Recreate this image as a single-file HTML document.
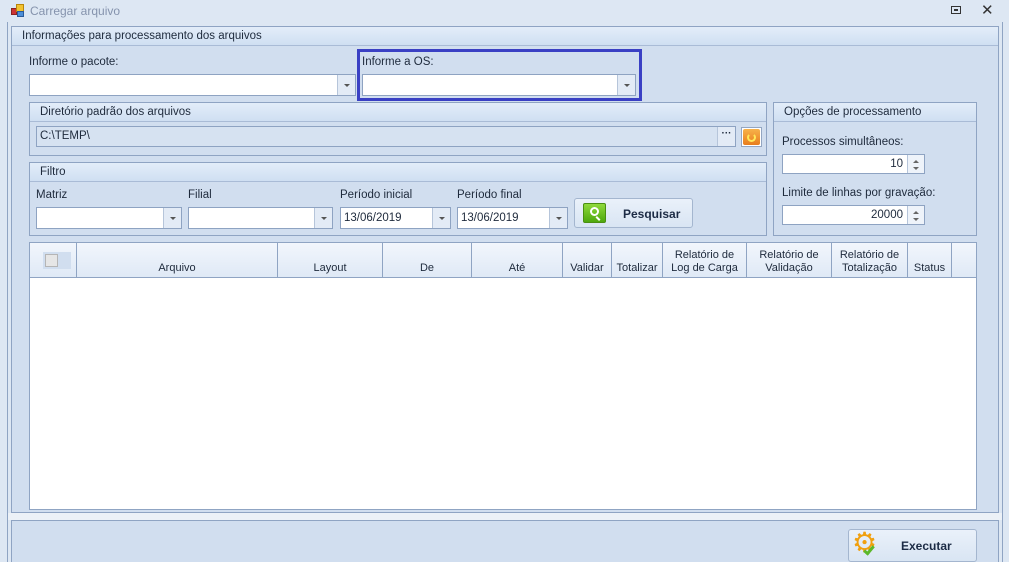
<!DOCTYPE html>
<html><head><meta charset="utf-8"><style>
*{box-sizing:border-box;margin:0;padding:0}
html,body{width:1009px;height:562px;overflow:hidden}
body{background:#dde7f3;font-family:"Liberation Sans",sans-serif;font-size:11.5px;color:#1e2a3c;position:relative}
.a{position:absolute}
.lbl{position:absolute;font-size:11.5px;color:#1e2a3c;white-space:nowrap}
.panel{position:absolute;background:#d1deef;border:1px solid #8fa4c3}
.hdr{position:absolute;left:0;right:0;top:0;height:19px;background:linear-gradient(#e3edf9,#cfdff2);border-bottom:1px solid #a9bbd6;padding:3px 0 0 10px;white-space:nowrap}
.box{position:absolute;background:#fff;border:1px solid #8ea3c2;height:22px;font-size:11.5px;padding:4px 3px;white-space:nowrap}
.dd{position:absolute;right:0;top:0;bottom:0;width:18px;border-left:1px solid #b6c5da;background:#e3ebf6}
.dd:after{content:"";position:absolute;left:6px;top:9px;border-left:3px solid transparent;border-right:3px solid transparent;border-top:3px solid #555}
.spin{position:absolute;right:0;top:0;bottom:0;width:17px;border-left:1px solid #b6c5da;background:#eef3fa}
.spin:before{content:"";position:absolute;left:5px;top:5px;border-left:3px solid transparent;border-right:3px solid transparent;border-bottom:3px solid #666}
.spin:after{content:"";position:absolute;left:5px;top:12px;border-left:3px solid transparent;border-right:3px solid transparent;border-top:3px solid #666}
.col{position:absolute;top:0;height:34px;border-right:1px solid #8fa4c3;text-align:center;font-size:11px;line-height:13px;display:flex;align-items:flex-end;justify-content:center;padding-bottom:2px}
.btn{position:absolute;border:1px solid #a4b6cf;border-radius:3px;background:linear-gradient(#eaf1fa,#d9e5f3);font-weight:bold;color:#1c2b45}
</style></head><body>
<div class="a" style="left:11px;top:4px;width:14px;height:14px">
<div class="a" style="left:0;top:4px;width:6px;height:7px;background:#c33;border:1px solid #822"></div>
<div class="a" style="left:5px;top:0;width:8px;height:8px;background:#f2c230;border:1px solid #b8860b"></div>
<div class="a" style="left:6px;top:7px;width:7px;height:6px;background:#4d8fd8;border:1px solid #2a5a9a"></div>
</div>
<div class="lbl" style="left:30px;top:4px;font-size:12px;color:#8593ad">Carregar arquivo</div>
<div class="a" style="left:951px;top:6px;width:10px;height:8px;border:1px solid #333"><div class="a" style="left:2px;top:2px;width:4px;height:2px;border:1px solid #333"></div></div>
<div class="lbl" style="left:981px;top:1px;font-size:15px;color:#333">✕</div>
<div class="a" style="left:7px;top:22px;width:1px;height:540px;background:#8fa4c3"></div>
<div class="a" style="left:1002px;top:22px;width:1px;height:540px;background:#8fa4c3"></div>

<div class="panel" style="left:11px;top:26px;width:988px;height:487px">
<div class="hdr">Informações para processamento dos arquivos</div>
</div>
<div class="a" style="left:8px;top:513px;width:994px;height:7px;background:#ecf1f7"></div>
<div class="panel" style="left:11px;top:520px;width:988px;height:42px;border-bottom:none"></div>

<div class="lbl" style="left:29px;top:56px">Informe o pacote:</div>
<div class="box" style="left:29px;top:74px;width:327px"><div class="dd"></div></div>
<div class="a" style="left:357px;top:49px;width:285px;height:52px;border:3px solid #3a40c4"></div>
<div class="lbl" style="left:362px;top:56px">Informe a OS:</div>
<div class="box" style="left:362px;top:74px;width:274px"><div class="dd"></div></div>

<div class="panel" style="left:29px;top:102px;width:738px;height:54px"><div class="hdr">Diretório padrão dos arquivos</div></div>
<div class="box" style="left:36px;top:126px;width:700px;height:21px;background:#d6e2f1;padding-top:3px">C:\TEMP\<div class="a" style="right:0;top:0;bottom:0;width:18px;border-left:1px solid #b6c5da;background:#e3ebf6;text-align:center;font-weight:bold;font-size:10px;line-height:14px">···</div></div>
<div class="a" style="left:741px;top:127px;width:21px;height:20px;border:1px solid #93a6c2;background:#fff;padding:1px"><div style="width:17px;height:16px;background:linear-gradient(#f7b24a,#e87d1d);border-radius:2px;position:relative"><div class="a" style="left:4px;top:4px;width:9px;height:9px;border:2px solid #ffe85a;border-top-color:transparent;border-radius:50%"></div></div></div>

<div class="panel" style="left:773px;top:102px;width:204px;height:134px"><div class="hdr">Opções de processamento</div></div>
<div class="lbl" style="left:782px;top:136px">Processos simultâneos:</div>
<div class="box" style="left:782px;top:154px;width:143px;height:20px;text-align:right;padding:3px 21px 0 0">10<div class="spin"></div></div>
<div class="lbl" style="left:782px;top:187px">Limite de linhas por gravação:</div>
<div class="box" style="left:782px;top:205px;width:143px;height:20px;text-align:right;padding:3px 21px 0 0">20000<div class="spin"></div></div>

<div class="panel" style="left:29px;top:162px;width:738px;height:74px"><div class="hdr">Filtro</div></div>
<div class="lbl" style="left:36px;top:189px">Matriz</div>
<div class="box" style="left:36px;top:207px;width:146px"><div class="dd"></div></div>
<div class="lbl" style="left:188px;top:189px">Filial</div>
<div class="box" style="left:188px;top:207px;width:145px"><div class="dd"></div></div>
<div class="lbl" style="left:340px;top:189px">Período inicial</div>
<div class="box" style="left:340px;top:207px;width:111px">13/06/2019<div class="dd"></div></div>
<div class="lbl" style="left:457px;top:189px">Período final</div>
<div class="box" style="left:457px;top:207px;width:111px">13/06/2019<div class="dd"></div></div>
<div class="btn" style="left:574px;top:198px;width:119px;height:30px">
<div class="a" style="left:8px;top:4px;width:23px;height:20px;border-radius:2px;background:linear-gradient(#8fd93c,#4ea80e);border:1px solid #4a8f12"><div class="a" style="left:6px;top:3px;width:9px;height:9px;border:2px solid #fff;border-radius:50%"></div><div class="a" style="left:13px;top:12px;width:2px;height:5px;background:#fff;transform:rotate(-45deg)"></div></div>
<div class="a" style="left:48px;top:8px;font-size:12px">Pesquisar</div></div>

<div class="a" style="left:29px;top:242px;width:948px;height:268px;background:#fff;border:1px solid #8fa4c3">
<div class="a" style="left:0;top:0;width:946px;height:35px;background:linear-gradient(#f2f6fc,#dfe9f6);border-bottom:1px solid #8fa4c3">
<div class="col" style="left:0;width:47px"><div class="a" style="left:13px;top:9px;width:28px;height:17px;background:#d1deef"></div><div class="a" style="left:15px;top:11px;width:13px;height:13px;border:1px solid #b5b5b5;background:#e6e6e6"></div></div>
<div class="col" style="left:47px;width:201px">Arquivo</div>
<div class="col" style="left:248px;width:105px">Layout</div>
<div class="col" style="left:353px;width:89px">De</div>
<div class="col" style="left:442px;width:91px">Até</div>
<div class="col" style="left:533px;width:49px">Validar</div>
<div class="col" style="left:582px;width:51px">Totalizar</div>
<div class="col" style="left:633px;width:84px">Relatório de<br>Log de Carga</div>
<div class="col" style="left:717px;width:85px">Relatório de<br>Validação</div>
<div class="col" style="left:802px;width:76px">Relatório de<br>Totalização</div>
<div class="col" style="left:878px;width:44px">Status</div>
</div></div>

<div class="btn" style="left:848px;top:529px;width:129px;height:33px">
<div class="a" style="left:3px;top:-2px;font-size:28px;color:#f0a010;font-weight:normal;line-height:30px">⚙</div>
<div class="a" style="left:17px;top:14px;width:6px;height:11px;border-right:3px solid #5cb82a;border-bottom:3px solid #5cb82a;transform:rotate(40deg)"></div>
<div class="a" style="left:52px;top:9px;font-size:12px">Executar</div></div>
</body></html>
